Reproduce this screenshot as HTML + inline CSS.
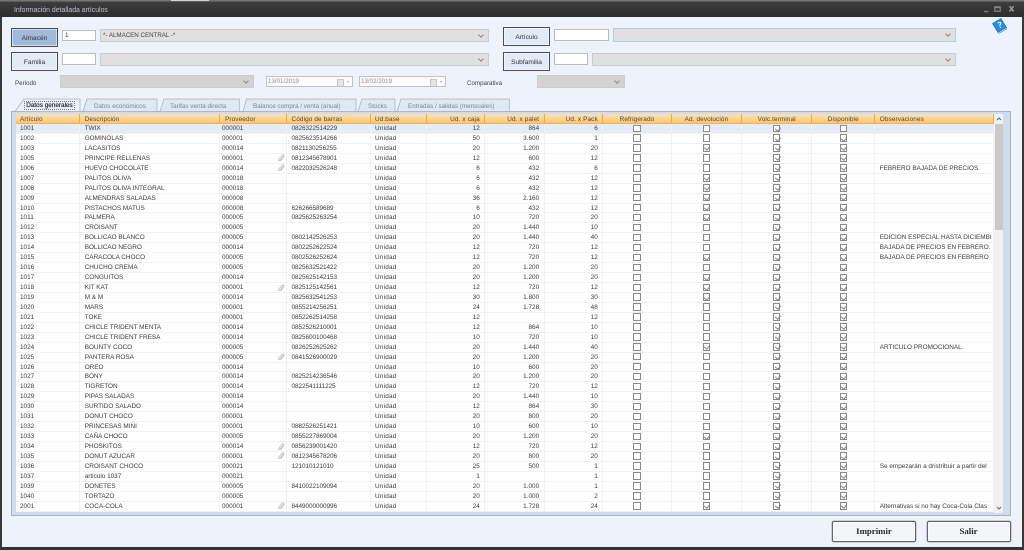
<!DOCTYPE html>
<html lang="es"><head><meta charset="utf-8"><title>Información detallada artículos</title>
<style>
*{box-sizing:border-box}
html,body{margin:0;padding:0;width:1024px;height:550px;overflow:hidden;background:#333}
body{font-family:"Liberation Sans",sans-serif;font-size:6.4px;color:#3a3a3a}
#w{position:absolute;left:0;top:0;width:1024px;height:550px;background:#eef2fa;filter:blur(.22px);overflow:hidden}
.a{position:absolute}
#tb{left:0;top:0;width:1024px;height:17px;background:linear-gradient(#7a7a7a 0,#666 1.5px,#3c3c3c 2px,#2e2e2e 100%)}
#tt{left:14px;top:7px;color:#bcc3ca;font-size:6.9px;white-space:nowrap}
.btn{border:1px solid #4a4f55;background:#e2eaf5;text-align:center;color:#333;font-size:6.6px;width:47px;height:19px;line-height:19px;box-shadow:inset 0 0 0 .5px #fff}
.in{background:#fff;border:1px solid #b8bcc0;font-size:6.4px;line-height:9px;padding-left:2px;color:#333}
.cb{background:#e0e0e0;border:1px solid #c9ccce;font-size:6.2px;line-height:12px;padding-left:2px;color:#444}
.cb:after{content:"";position:absolute;right:5px;top:3px;width:3px;height:3px;border-right:1px solid #888;border-bottom:1px solid #888;transform:rotate(45deg)}
.lb{font-size:6.2px;color:#444;white-space:nowrap}
.dt{background:#fcfcfd;border:1px solid #bfc3c8;font-size:6.2px;line-height:10px;padding-left:1px;color:#8b8f94}
.dt:before{content:"";position:absolute;right:8px;top:2px;width:5px;height:6px;background:#e4e4e4;border:1px solid #c4c4c4;border-radius:1px}
.dt:after{content:"";position:absolute;right:3px;top:4px;border:1.5px solid transparent;border-top:2px solid #aaa}
#pn{left:11px;top:111px;width:1000px;height:405px;background:#cfdcee;border:1px solid #a8b3c1}
.tl{font-size:6.3px;color:#7d838a;white-space:nowrap;top:103px}
#hd{left:16px;top:114px;width:978px;height:10px;background:linear-gradient(#fce3b4,#f8c777);display:flex;border-bottom:1px solid #f2b25a}
#hd span{display:block;height:9px;line-height:11px;border-right:1px solid #f0a84a;white-space:nowrap;color:#4c4433;padding:0 4.5px;overflow:hidden;letter-spacing:.12px}
#bd{left:16px;top:124px;width:978px;height:388px;background:#fff}
.r{display:flex;height:9.945px;box-shadow:inset 0 -1px #f2f2f2;line-height:10.6px}
.r.s{background:#e7ebf6}
.r>b{display:block;font-weight:400;height:100%;border-right:1px solid #f1f1f1;white-space:nowrap;overflow:hidden;padding:0 4.5px;position:relative}
.w1{width:64px}.w2{width:140px}.w3{width:67px}.w4{width:83.5px}.w5{width:56.2px}.w6{width:58.6px}.w7{width:59.4px}.w8{width:58.6px}.w9{width:68.4px}.w10{width:70.6px}.w11{width:70px}.w12{width:63px}.w13{width:118.7px}
#hd .w1,.r>.w1{padding-left:4px}#hd .w2,.r>.w2{padding-left:4.7px}.r>.w3{padding-left:2px}#hd .w3{padding-left:5px}
#hd .w6,#hd .w7,#hd .w8,.r>.w6,.r>.w7,.r>.w8{text-align:right}
#hd .w9,#hd .w10,#hd .w11,#hd .w12{text-align:center}
.r>.w9,.r>.w10,.r>.w11,.r>.w12{padding:0}
.r>.w4{letter-spacing:-.05px}
.r>.w5{letter-spacing:.22px}
i{display:block;width:7.4px;height:7.4px;margin:.5px auto 0;border:1px solid #8a8a8a;background:#fff;position:relative}
i.c:after{content:"";position:absolute;left:1.7px;top:.1px;width:2.6px;height:4.2px;border-right:1px solid #808080;border-bottom:1px solid #808080;transform:rotate(40deg)}
.k{position:absolute;right:1px;top:.5px}
#sb{left:994px;top:114px;width:9px;height:399px;background:#f1f1f1}
#th{left:995px;top:124px;width:8px;height:106px;background:#c9c9c9}
.pb{border:1.5px solid #62666a;border-radius:2px;background:#f3f5f9;box-shadow:inset 0 0 0 .7px #fff,0 0 0 .5px #aaa;font-family:"Liberation Serif",serif;font-weight:700;font-size:8.8px;text-align:center;line-height:18px;color:#2a2a2a;width:84px;height:21px}
</style></head><body><div id="w">
<div class="a" id="tb"></div>
<div class="a" style="left:171px;top:0;width:38px;height:1px;background:#cfd6d8"></div>
<div class="a" id="tt">Información detallada artículos</div>
<svg class="a" style="left:980px;top:3px" width="42" height="12" viewBox="0 0 42 12"><path d="M4 8.5H8.5" stroke="#7c7c7c" stroke-width="1.3"/><path d="M14.8 3.8H20.2V8.2H14.8Z" fill="none" stroke="#8a8a8a" stroke-width="1.1"/><path d="M14.8 4.4H20.2" stroke="#8a8a8a" stroke-width="1.6"/><path d="M29.6 3.2L33.6 8.4M33.6 3.2L29.6 8.4" stroke="#9a9a9a" stroke-width="1.5"/></svg>
<div class="a" style="left:0;top:17px;width:2px;height:533px;background:#3a3a3a"></div>
<div class="a" style="left:1022px;top:17px;width:2px;height:533px;background:#3a3a3a"></div>
<div class="a" style="left:0;top:547px;width:1024px;height:3px;background:#333"></div>

<div class="a btn" style="left:11px;top:28px;background:#a3b9da;line-height:20px">Almacén</div>
<div class="a in" style="left:62px;top:30px;width:34px;height:11px">1</div>
<div class="a cb" style="left:100px;top:29px;width:389px;height:13px">*- ALMACEN CENTRAL -*</div>
<div class="a btn" style="left:11px;top:52px">Familia</div>
<div class="a in" style="left:62px;top:53px;width:34px;height:12px"></div>
<div class="a cb" style="left:100px;top:53px;width:389px;height:13px"></div>
<div class="a btn" style="left:503px;top:27px">Artículo</div>
<div class="a in" style="left:554px;top:29px;width:55px;height:12px"></div>
<div class="a cb" style="left:613px;top:28px;width:343px;height:14px;border-color:#b5cde0"></div>
<div class="a btn" style="left:503px;top:52px">Subfamilia</div>
<div class="a in" style="left:554px;top:53px;width:34px;height:12px"></div>
<div class="a cb" style="left:592px;top:53px;width:364px;height:13px"></div>
<div class="a lb" style="left:15px;top:80px">Periodo</div>
<div class="a cb" style="left:60px;top:75px;width:194px;height:13px;background:#d3d3d3"></div>
<div class="a dt" style="left:266px;top:76px;width:87px;height:11px">13/01/2019</div>
<div class="a dt" style="left:359px;top:76px;width:87px;height:11px">13/02/2019</div>
<div class="a lb" style="left:467px;top:80px">Comparativa</div>
<div class="a cb" style="left:537px;top:75px;width:88px;height:13px;background:#d3d3d3"></div>
<svg class="a" style="left:991px;top:17px" width="17" height="17" viewBox="0 0 17 17"><path d="M1.5 6.5L10 1.5L15.5 10.5L7 15.5Z" fill="#2a8fd8" stroke="#1767a8" stroke-width=".6"/><path d="M1.5 6.5L7 15.5L8 16.5L15.8 12L15.5 10.5L7 15.5" fill="#cfe6f6" stroke="#1767a8" stroke-width=".5"/><path d="M6.8 6.4C7.4 5 9.6 4.8 9.8 6.2C10 7.4 8.4 7.6 8.8 9" fill="none" stroke="#fff" stroke-width="1"/><circle cx="9.4" cy="10.4" r=".7" fill="#fff"/></svg>

<div class="a" id="pn"></div>
<svg class="a" style="left:0;top:96px" width="520" height="17" viewBox="0 0 520 17">
<g fill="#dfe9f4" stroke="#a8b3c1" stroke-width=".8">
<path d="M397 15.5L401 3H509.3V15.5Z"/><path d="M358 15.5L362 3H395V15.5Z"/><path d="M243 15.5L246.500 3H356V15.5Z"/><path d="M160 15.5L164 3H239.300V15.5Z"/><path d="M83 15.5L87 3H157V15.5Z"/>
<path d="M15 15.500L24 3H80V15.500Z" fill="#eaf0f8"/></g></svg>
<div class="a" style="left:24px;top:101px;width:51px;height:9px;border:1px dotted #777;font-size:6.4px;line-height:8px;color:#222;white-space:nowrap;text-align:center;-webkit-text-stroke:.15px #222">Datos generales</div>
<div class="a tl" style="left:94px">Datos económicos</div>
<div class="a tl" style="left:170px">Tarifas venta directa</div>
<div class="a tl" style="left:253px">Balance compra / venta (anual)</div>
<div class="a tl" style="left:368px">Stocks</div>
<div class="a tl" style="left:408px">Entradas / salidas (mensuales)</div>

<div class="a" id="hd"><span class="w1">Artículo</span><span class="w2">Descripción</span><span class="w3">Proveedor</span><span class="w4">Código de barras</span><span class="w5">Ud.base</span><span class="w6">Ud. x caja</span><span class="w7">Ud. x palet</span><span class="w8">Ud. x Pack</span><span class="w9">Refrigerado</span><span class="w10">Ad. devolución</span><span class="w11">Volc.terminal</span><span class="w12">Disponible</span><span class="w13">Observaciones</span></div>

<div class="a" id="bd">
<div class="r s"><b class="w1">1001</b><b class="w2">TWIX</b><b class="w3">000001</b><b class="w4">0826322514229</b><b class="w5">Unidad</b><b class="w6">12</b><b class="w7">864</b><b class="w8">6</b><b class="w9"><i></i></b><b class="w10"><i></i></b><b class="w11"><i class="c"></i></b><b class="w12"><i></i></b><b class="w13"></b></div>
<div class="r"><b class="w1">1002</b><b class="w2">GOMINOLAS</b><b class="w3">000001</b><b class="w4">0825623514266</b><b class="w5">Unidad</b><b class="w6">50</b><b class="w7">3.600</b><b class="w8">1</b><b class="w9"><i></i></b><b class="w10"><i></i></b><b class="w11"><i class="c"></i></b><b class="w12"><i class="c"></i></b><b class="w13"></b></div>
<div class="r"><b class="w1">1003</b><b class="w2">LACASITOS</b><b class="w3">000014</b><b class="w4">0821130256255</b><b class="w5">Unidad</b><b class="w6">20</b><b class="w7">1.200</b><b class="w8">20</b><b class="w9"><i></i></b><b class="w10"><i class="c"></i></b><b class="w11"><i class="c"></i></b><b class="w12"><i class="c"></i></b><b class="w13"></b></div>
<div class="r"><b class="w1">1005</b><b class="w2">PRINCIPE RELLENAS</b><b class="w3">000001<svg class="k" width="8" height="9" viewBox="0 0 8 9"><path d="M6.500 2L3 6.200C2.300 7.200 1 6.300 1.700 5.300L5 1.300C6.100.2 7.700 1.500 6.700 2.800L3.700 7" fill="none" stroke="#c4c4c4" stroke-width=".9"/></svg></b><b class="w4">0812345678901</b><b class="w5">Unidad</b><b class="w6">12</b><b class="w7">600</b><b class="w8">12</b><b class="w9"><i></i></b><b class="w10"><i></i></b><b class="w11"><i class="c"></i></b><b class="w12"><i class="c"></i></b><b class="w13"></b></div>
<div class="r"><b class="w1">1006</b><b class="w2">HUEVO CHOCOLATE</b><b class="w3">000014<svg class="k" width="8" height="9" viewBox="0 0 8 9"><path d="M6.500 2L3 6.200C2.300 7.200 1 6.300 1.700 5.300L5 1.300C6.100.2 7.700 1.500 6.700 2.800L3.700 7" fill="none" stroke="#c4c4c4" stroke-width=".9"/></svg></b><b class="w4">0822032526248</b><b class="w5">Unidad</b><b class="w6">6</b><b class="w7">432</b><b class="w8">6</b><b class="w9"><i></i></b><b class="w10"><i></i></b><b class="w11"><i class="c"></i></b><b class="w12"><i class="c"></i></b><b class="w13">FEBRERO BAJADA DE PRECIOS.</b></div>
<div class="r"><b class="w1">1007</b><b class="w2">PALITOS OLIVA</b><b class="w3">000018</b><b class="w4"></b><b class="w5">Unidad</b><b class="w6">6</b><b class="w7">432</b><b class="w8">12</b><b class="w9"><i></i></b><b class="w10"><i class="c"></i></b><b class="w11"><i class="c"></i></b><b class="w12"><i class="c"></i></b><b class="w13"></b></div>
<div class="r"><b class="w1">1008</b><b class="w2">PALITOS OLIVA INTEGRAL</b><b class="w3">000018</b><b class="w4"></b><b class="w5">Unidad</b><b class="w6">6</b><b class="w7">432</b><b class="w8">12</b><b class="w9"><i></i></b><b class="w10"><i class="c"></i></b><b class="w11"><i class="c"></i></b><b class="w12"><i class="c"></i></b><b class="w13"></b></div>
<div class="r"><b class="w1">1009</b><b class="w2">ALMENDRAS SALADAS</b><b class="w3">000008</b><b class="w4"></b><b class="w5">Unidad</b><b class="w6">36</b><b class="w7">2.160</b><b class="w8">12</b><b class="w9"><i></i></b><b class="w10"><i class="c"></i></b><b class="w11"><i class="c"></i></b><b class="w12"><i class="c"></i></b><b class="w13"></b></div>
<div class="r"><b class="w1">1010</b><b class="w2">PISTACHOS MATUS</b><b class="w3">000008</b><b class="w4">626266589689</b><b class="w5">Unidad</b><b class="w6">6</b><b class="w7">432</b><b class="w8">12</b><b class="w9"><i></i></b><b class="w10"><i class="c"></i></b><b class="w11"><i class="c"></i></b><b class="w12"><i class="c"></i></b><b class="w13"></b></div>
<div class="r"><b class="w1">1011</b><b class="w2">PALMERA</b><b class="w3">000005</b><b class="w4">0825625263254</b><b class="w5">Unidad</b><b class="w6">10</b><b class="w7">720</b><b class="w8">20</b><b class="w9"><i></i></b><b class="w10"><i class="c"></i></b><b class="w11"><i class="c"></i></b><b class="w12"><i class="c"></i></b><b class="w13"></b></div>
<div class="r"><b class="w1">1012</b><b class="w2">CROISANT</b><b class="w3">000005</b><b class="w4"></b><b class="w5">Unidad</b><b class="w6">20</b><b class="w7">1.440</b><b class="w8">10</b><b class="w9"><i></i></b><b class="w10"><i></i></b><b class="w11"><i class="c"></i></b><b class="w12"><i class="c"></i></b><b class="w13"></b></div>
<div class="r"><b class="w1">1013</b><b class="w2">BOLLICAO BLANCO</b><b class="w3">000005</b><b class="w4">0802142526253</b><b class="w5">Unidad</b><b class="w6">20</b><b class="w7">1.440</b><b class="w8">40</b><b class="w9"><i></i></b><b class="w10"><i></i></b><b class="w11"><i class="c"></i></b><b class="w12"><i class="c"></i></b><b class="w13">EDICION ESPECIAL HASTA DICIEMBI</b></div>
<div class="r"><b class="w1">1014</b><b class="w2">BOLLICAO NEGRO</b><b class="w3">000014</b><b class="w4">0802252622524</b><b class="w5">Unidad</b><b class="w6">12</b><b class="w7">720</b><b class="w8">12</b><b class="w9"><i></i></b><b class="w10"><i></i></b><b class="w11"><i class="c"></i></b><b class="w12"><i class="c"></i></b><b class="w13">BAJADA DE PRECIOS EN FEBRERO.</b></div>
<div class="r"><b class="w1">1015</b><b class="w2">CARACOLA CHOCO</b><b class="w3">000005</b><b class="w4">0802526252624</b><b class="w5">Unidad</b><b class="w6">12</b><b class="w7">720</b><b class="w8">12</b><b class="w9"><i></i></b><b class="w10"><i class="c"></i></b><b class="w11"><i class="c"></i></b><b class="w12"><i class="c"></i></b><b class="w13">BAJADA DE PRECIOS EN FEBRERO</b></div>
<div class="r"><b class="w1">1016</b><b class="w2">CHUCHO CREMA</b><b class="w3">000005</b><b class="w4">0825632521422</b><b class="w5">Unidad</b><b class="w6">20</b><b class="w7">1.200</b><b class="w8">20</b><b class="w9"><i></i></b><b class="w10"><i></i></b><b class="w11"><i class="c"></i></b><b class="w12"><i class="c"></i></b><b class="w13"></b></div>
<div class="r"><b class="w1">1017</b><b class="w2">CONGUITOS</b><b class="w3">000014</b><b class="w4">0825625142153</b><b class="w5">Unidad</b><b class="w6">20</b><b class="w7">1.200</b><b class="w8">20</b><b class="w9"><i></i></b><b class="w10"><i class="c"></i></b><b class="w11"><i class="c"></i></b><b class="w12"><i class="c"></i></b><b class="w13"></b></div>
<div class="r"><b class="w1">1018</b><b class="w2">KIT KAT</b><b class="w3">000001<svg class="k" width="8" height="9" viewBox="0 0 8 9"><path d="M6.500 2L3 6.200C2.300 7.200 1 6.300 1.700 5.300L5 1.300C6.100.2 7.700 1.500 6.700 2.800L3.700 7" fill="none" stroke="#c4c4c4" stroke-width=".9"/></svg></b><b class="w4">0825125142561</b><b class="w5">Unidad</b><b class="w6">12</b><b class="w7">720</b><b class="w8">12</b><b class="w9"><i></i></b><b class="w10"><i class="c"></i></b><b class="w11"><i class="c"></i></b><b class="w12"><i class="c"></i></b><b class="w13"></b></div>
<div class="r"><b class="w1">1019</b><b class="w2">M &amp; M</b><b class="w3">000014</b><b class="w4">0825632541253</b><b class="w5">Unidad</b><b class="w6">30</b><b class="w7">1.800</b><b class="w8">30</b><b class="w9"><i></i></b><b class="w10"><i class="c"></i></b><b class="w11"><i class="c"></i></b><b class="w12"><i class="c"></i></b><b class="w13"></b></div>
<div class="r"><b class="w1">1020</b><b class="w2">MARS</b><b class="w3">000001</b><b class="w4">0855214256251</b><b class="w5">Unidad</b><b class="w6">24</b><b class="w7">1.728</b><b class="w8">48</b><b class="w9"><i></i></b><b class="w10"><i></i></b><b class="w11"><i class="c"></i></b><b class="w12"><i class="c"></i></b><b class="w13"></b></div>
<div class="r"><b class="w1">1021</b><b class="w2">TOKE</b><b class="w3">000001</b><b class="w4">0852262514258</b><b class="w5">Unidad</b><b class="w6">12</b><b class="w7"></b><b class="w8">12</b><b class="w9"><i></i></b><b class="w10"><i></i></b><b class="w11"><i class="c"></i></b><b class="w12"><i class="c"></i></b><b class="w13"></b></div>
<div class="r"><b class="w1">1022</b><b class="w2">CHICLE TRIDENT MENTA</b><b class="w3">000014</b><b class="w4">0852526210001</b><b class="w5">Unidad</b><b class="w6">12</b><b class="w7">864</b><b class="w8">10</b><b class="w9"><i></i></b><b class="w10"><i></i></b><b class="w11"><i class="c"></i></b><b class="w12"><i class="c"></i></b><b class="w13"></b></div>
<div class="r"><b class="w1">1023</b><b class="w2">CHICLE TRIDENT FRESA</b><b class="w3">000014</b><b class="w4">0825600100468</b><b class="w5">Unidad</b><b class="w6">10</b><b class="w7">720</b><b class="w8">10</b><b class="w9"><i></i></b><b class="w10"><i></i></b><b class="w11"><i class="c"></i></b><b class="w12"><i class="c"></i></b><b class="w13"></b></div>
<div class="r"><b class="w1">1024</b><b class="w2">BOUNTY COCO</b><b class="w3">000005</b><b class="w4">0826252625262</b><b class="w5">Unidad</b><b class="w6">20</b><b class="w7">1.440</b><b class="w8">40</b><b class="w9"><i></i></b><b class="w10"><i class="c"></i></b><b class="w11"><i class="c"></i></b><b class="w12"><i class="c"></i></b><b class="w13">ARTICULO PROMOCIONAL.</b></div>
<div class="r"><b class="w1">1025</b><b class="w2">PANTERA ROSA</b><b class="w3">000005<svg class="k" width="8" height="9" viewBox="0 0 8 9"><path d="M6.500 2L3 6.200C2.300 7.200 1 6.300 1.700 5.300L5 1.300C6.100.2 7.700 1.500 6.700 2.800L3.700 7" fill="none" stroke="#c4c4c4" stroke-width=".9"/></svg></b><b class="w4">0841526900029</b><b class="w5">Unidad</b><b class="w6">20</b><b class="w7">1.200</b><b class="w8">20</b><b class="w9"><i></i></b><b class="w10"><i></i></b><b class="w11"><i class="c"></i></b><b class="w12"><i class="c"></i></b><b class="w13"></b></div>
<div class="r"><b class="w1">1026</b><b class="w2">OREO</b><b class="w3">000014</b><b class="w4"></b><b class="w5">Unidad</b><b class="w6">10</b><b class="w7">600</b><b class="w8">20</b><b class="w9"><i></i></b><b class="w10"><i></i></b><b class="w11"><i class="c"></i></b><b class="w12"><i class="c"></i></b><b class="w13"></b></div>
<div class="r"><b class="w1">1027</b><b class="w2">BONY</b><b class="w3">000014</b><b class="w4">0825214236546</b><b class="w5">Unidad</b><b class="w6">20</b><b class="w7">1.200</b><b class="w8">20</b><b class="w9"><i></i></b><b class="w10"><i></i></b><b class="w11"><i class="c"></i></b><b class="w12"><i class="c"></i></b><b class="w13"></b></div>
<div class="r"><b class="w1">1028</b><b class="w2">TIGRETON</b><b class="w3">000014</b><b class="w4">0822541111225</b><b class="w5">Unidad</b><b class="w6">12</b><b class="w7">720</b><b class="w8">12</b><b class="w9"><i></i></b><b class="w10"><i></i></b><b class="w11"><i class="c"></i></b><b class="w12"><i class="c"></i></b><b class="w13"></b></div>
<div class="r"><b class="w1">1029</b><b class="w2">PIPAS SALADAS</b><b class="w3">000014</b><b class="w4"></b><b class="w5">Unidad</b><b class="w6">20</b><b class="w7">1.440</b><b class="w8">10</b><b class="w9"><i></i></b><b class="w10"><i></i></b><b class="w11"><i class="c"></i></b><b class="w12"><i class="c"></i></b><b class="w13"></b></div>
<div class="r"><b class="w1">1030</b><b class="w2">SURTIDO SALADO</b><b class="w3">000014</b><b class="w4"></b><b class="w5">Unidad</b><b class="w6">12</b><b class="w7">864</b><b class="w8">30</b><b class="w9"><i></i></b><b class="w10"><i></i></b><b class="w11"><i class="c"></i></b><b class="w12"><i class="c"></i></b><b class="w13"></b></div>
<div class="r"><b class="w1">1031</b><b class="w2">DONUT CHOCO</b><b class="w3">000001</b><b class="w4"></b><b class="w5">Unidad</b><b class="w6">20</b><b class="w7">800</b><b class="w8">20</b><b class="w9"><i></i></b><b class="w10"><i></i></b><b class="w11"><i class="c"></i></b><b class="w12"><i class="c"></i></b><b class="w13"></b></div>
<div class="r"><b class="w1">1032</b><b class="w2">PRINCESAS MINI</b><b class="w3">000001</b><b class="w4">0882526251421</b><b class="w5">Unidad</b><b class="w6">10</b><b class="w7">600</b><b class="w8">10</b><b class="w9"><i></i></b><b class="w10"><i></i></b><b class="w11"><i class="c"></i></b><b class="w12"><i class="c"></i></b><b class="w13"></b></div>
<div class="r"><b class="w1">1033</b><b class="w2">CAÑA CHOCO</b><b class="w3">000005</b><b class="w4">0855227869004</b><b class="w5">Unidad</b><b class="w6">20</b><b class="w7">1.200</b><b class="w8">20</b><b class="w9"><i></i></b><b class="w10"><i class="c"></i></b><b class="w11"><i class="c"></i></b><b class="w12"><i class="c"></i></b><b class="w13"></b></div>
<div class="r"><b class="w1">1034</b><b class="w2">PHOSKITOS</b><b class="w3">000014<svg class="k" width="8" height="9" viewBox="0 0 8 9"><path d="M6.500 2L3 6.200C2.300 7.200 1 6.300 1.700 5.300L5 1.300C6.100.2 7.700 1.500 6.700 2.800L3.700 7" fill="none" stroke="#c4c4c4" stroke-width=".9"/></svg></b><b class="w4">0856239001420</b><b class="w5">Unidad</b><b class="w6">12</b><b class="w7">720</b><b class="w8">12</b><b class="w9"><i></i></b><b class="w10"><i></i></b><b class="w11"><i class="c"></i></b><b class="w12"><i class="c"></i></b><b class="w13"></b></div>
<div class="r"><b class="w1">1035</b><b class="w2">DONUT AZUCAR</b><b class="w3">000001<svg class="k" width="8" height="9" viewBox="0 0 8 9"><path d="M6.500 2L3 6.200C2.300 7.200 1 6.300 1.700 5.300L5 1.300C6.100.2 7.700 1.500 6.700 2.800L3.700 7" fill="none" stroke="#c4c4c4" stroke-width=".9"/></svg></b><b class="w4">0812345678206</b><b class="w5">Unidad</b><b class="w6">20</b><b class="w7">800</b><b class="w8">20</b><b class="w9"><i></i></b><b class="w10"><i></i></b><b class="w11"><i class="c"></i></b><b class="w12"><i class="c"></i></b><b class="w13"></b></div>
<div class="r"><b class="w1">1036</b><b class="w2">CROISANT CHOCO</b><b class="w3">000021</b><b class="w4">121010121010</b><b class="w5">Unidad</b><b class="w6">25</b><b class="w7">500</b><b class="w8">1</b><b class="w9"><i></i></b><b class="w10"><i></i></b><b class="w11"><i class="c"></i></b><b class="w12"><i class="c"></i></b><b class="w13">Se empezarán a dristribuir a partir del</b></div>
<div class="r"><b class="w1">1037</b><b class="w2">articulo 1037</b><b class="w3">000021</b><b class="w4"></b><b class="w5">Unidad</b><b class="w6">1</b><b class="w7"></b><b class="w8">1</b><b class="w9"><i></i></b><b class="w10"><i></i></b><b class="w11"><i class="c"></i></b><b class="w12"><i class="c"></i></b><b class="w13"></b></div>
<div class="r"><b class="w1">1039</b><b class="w2">DONETES</b><b class="w3">000005</b><b class="w4">8410022109094</b><b class="w5">Unidad</b><b class="w6">20</b><b class="w7">1.000</b><b class="w8">1</b><b class="w9"><i></i></b><b class="w10"><i></i></b><b class="w11"><i class="c"></i></b><b class="w12"><i class="c"></i></b><b class="w13"></b></div>
<div class="r"><b class="w1">1040</b><b class="w2">TORTAZO</b><b class="w3">000005</b><b class="w4"></b><b class="w5">Unidad</b><b class="w6">20</b><b class="w7">1.000</b><b class="w8">2</b><b class="w9"><i></i></b><b class="w10"><i></i></b><b class="w11"><i class="c"></i></b><b class="w12"><i class="c"></i></b><b class="w13"></b></div>
<div class="r"><b class="w1">2001</b><b class="w2">COCA-COLA</b><b class="w3">000001<svg class="k" width="8" height="9" viewBox="0 0 8 9"><path d="M6.500 2L3 6.200C2.300 7.200 1 6.300 1.700 5.300L5 1.300C6.100.2 7.700 1.500 6.700 2.800L3.700 7" fill="none" stroke="#c4c4c4" stroke-width=".9"/></svg></b><b class="w4">8449000000996</b><b class="w5">Unidad</b><b class="w6">24</b><b class="w7">1.728</b><b class="w8">24</b><b class="w9"><i></i></b><b class="w10"><i class="c"></i></b><b class="w11"><i class="c"></i></b><b class="w12"><i class="c"></i></b><b class="w13">Alternativas si no hay Coca-Cola Clas</b></div>
</div>

<div class="a" id="sb"></div>
<div class="a" id="th"></div>
<svg class="a" style="left:994px;top:114px" width="9" height="399" viewBox="0 0 9 399"><path d="M3 6L5 4L7 6" fill="none" stroke="#666" stroke-width="1"/><path d="M3 393L5 395L7 393" fill="none" stroke="#666" stroke-width="1"/></svg>

<div class="a pb" style="left:832px;top:521px">Imprimir</div>
<div class="a pb" style="left:926.500px;top:521px">Salir</div>
</div></body></html>
